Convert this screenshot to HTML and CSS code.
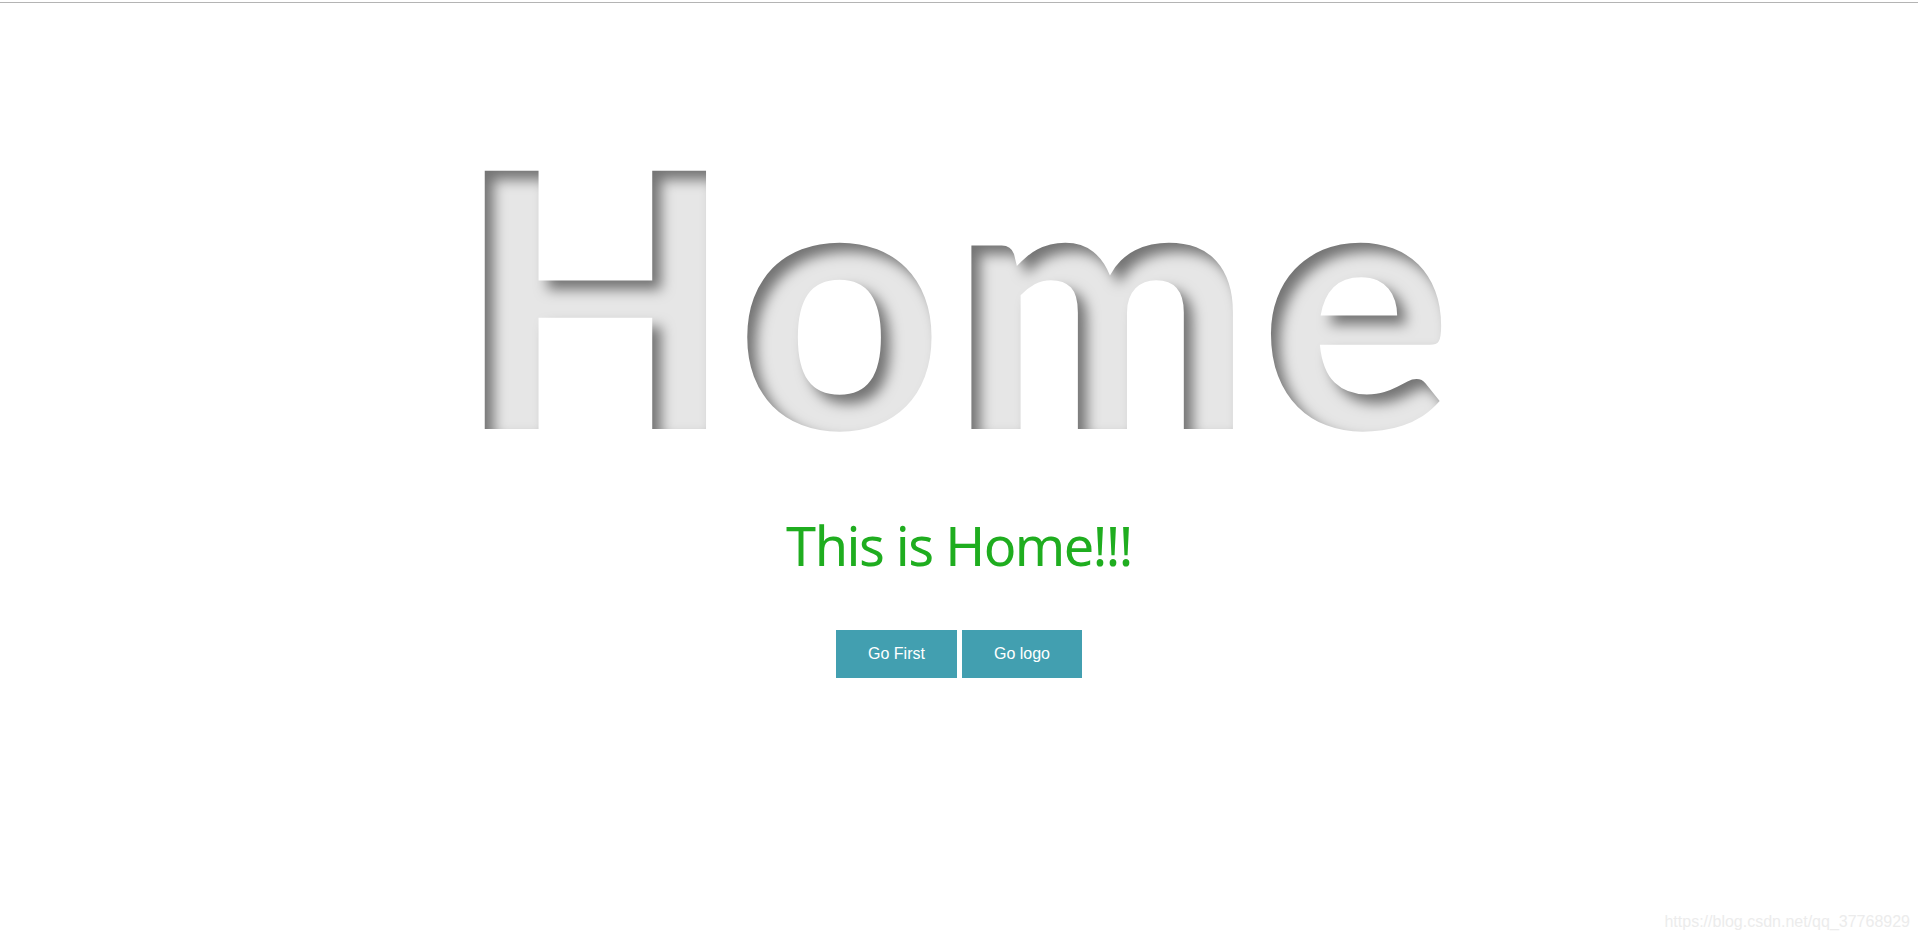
FILE: index.html
```html
<!DOCTYPE html>
<html lang="en">
<head>
<meta charset="utf-8">
<title>Home</title>
<link rel="stylesheet" href="styles.css">
</head>
<body>
<div class="topline"></div>
<main class="page">
  <h1 class="hero">Home</h1>
  <p class="subtitle">This is Home!!!</p>
  <div class="actions">
    <button class="btn">Go First</button>
    <button class="btn btn-narrow">Go logo</button>
  </div>
</main>
<div class="watermark">https://blog.csdn.net/qq_37768929</div>
</body>
</html>
```
FILE: styles.css
```css
html, body {
  margin: 0;
  padding: 0;
  background: #ffffff;
}
body {
  width: 1918px;
  height: 939px;
  overflow: hidden;
  position: relative;
  font-family: "Liberation Sans", Arial, sans-serif;
}
.topline {
  margin-top: 2px;
  height: 1px;
  background: #b4b4b4;
}
.page {
  display: flex;
  flex-direction: column;
  align-items: center;
  padding-top: 111px;
}
.hero {
  margin: 0;
  font-family: "Lato", "Open Sans", sans-serif;
  font-weight: 900;
  font-size: 356px;
  line-height: 356px;
  letter-spacing: 9px;
  color: transparent;
  background-color: #747474;
  -webkit-background-clip: text;
  background-clip: text;
  text-shadow: rgba(255, 255, 255, 0.82) 9px 9px 13px;
}
.subtitle {
  margin: 38px 0 0;
  font-family: "Noto Sans", "Open Sans", sans-serif;
  font-size: 54px;
  line-height: 74px;
  letter-spacing: -1.5px;
  color: #1fad1f;
}
.actions {
  display: flex;
  gap: 5px;
  margin-top: 48px;
}
.btn {
  width: 121px;
  height: 48px;
  border: none;
  margin: 0;
  padding: 0;
  background: #429fb0;
  color: #ffffff;
  font-family: "Liberation Sans", Arial, sans-serif;
  font-size: 16px;
}
.btn-narrow {
  width: 120px;
}
.watermark {
  position: absolute;
  right: 8px;
  bottom: 8px;
  font-family: "Liberation Sans", Arial, sans-serif;
  font-size: 16px;
  color: #ececec;
}
```
